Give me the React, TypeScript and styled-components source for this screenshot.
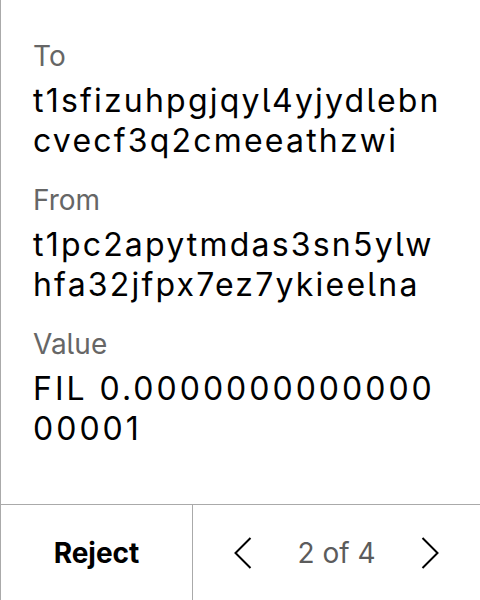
import React from "react";
import styled, { createGlobalStyle } from "styled-components";

const Global = createGlobalStyle`
  html, body { margin: 0; padding: 0; background: #fff; }
  body { font-family: Inter, "Noto Sans", sans-serif; font-feature-settings: "cv05" 1; }
`;

const Screen = styled.div`
  width: 480px;
  height: 600px;
  box-sizing: border-box;
  border-left: 1px solid #aaaaaa;
  display: flex;
  flex-direction: column;
  background: #fff;
`;

const Body = styled.div`
  flex: 1;
  padding: 39px 34px 0 32px;
  display: flex;
  flex-direction: column;
  gap: 22px;
`;

const Field = styled.div`
  display: flex;
  flex-direction: column;
`;

const Label = styled.div`
  font-size: 28px;
  line-height: 34px;
  color: #666666;
  margin-bottom: 8px;
`;

const Value = styled.div<{ $amount?: boolean }>`
  font-size: 32px;
  line-height: 40px;
  letter-spacing: ${(p) => (p.$amount ? "3px" : "2.2px")};
  color: #000;
  word-break: break-all;
`;

const Footer = styled.div`
  height: 95px;
  border-top: 1px solid #aaaaaa;
  display: flex;
`;

const RejectCell = styled.div`
  width: 191px;
  border-right: 1px solid #aaaaaa;
  display: flex;
  align-items: center;
  justify-content: center;
  font-size: 28px;
  font-weight: 700;
  color: #000;
`;

const Pager = styled.div`
  flex: 1;
  display: flex;
  align-items: center;
  justify-content: space-between;
  padding: 0 41px 0 41px;
`;

const PageText = styled.div`
  font-size: 28px;
  color: #5c5c5c;
`;

const Chevron = ({ dir }: { dir: "left" | "right" }) => (
  <svg width="18" height="32" viewBox="0 0 18 32" fill="none">
    <path
      d={dir === "left" ? "M16.5 1 L1.5 16 L16.5 31" : "M1.5 1 L16.5 16 L1.5 31"}
      stroke="#000"
      strokeWidth="2"
    />
  </svg>
);

const fields = [
  { label: "To", value: "t1sfizuhpgjqyl4yjydlebncvecf3q2cmeeathzwi", amount: false },
  { label: "From", value: "t1pc2apytmdas3sn5ylwhfa32jfpx7ez7ykieelna", amount: false },
  { label: "Value", value: "FIL 0.000000000000000001", amount: true },
];

export default function App() {
  return (
    <Screen>
      <Global />
      <Body>
        {fields.map((f) => (
          <Field key={f.label}>
            <Label>{f.label}</Label>
            <Value $amount={f.amount}>{f.value}</Value>
          </Field>
        ))}
      </Body>
      <Footer>
        <RejectCell>Reject</RejectCell>
        <Pager>
          <Chevron dir="left" />
          <PageText>2 of 4</PageText>
          <Chevron dir="right" />
        </Pager>
      </Footer>
    </Screen>
  );
}
